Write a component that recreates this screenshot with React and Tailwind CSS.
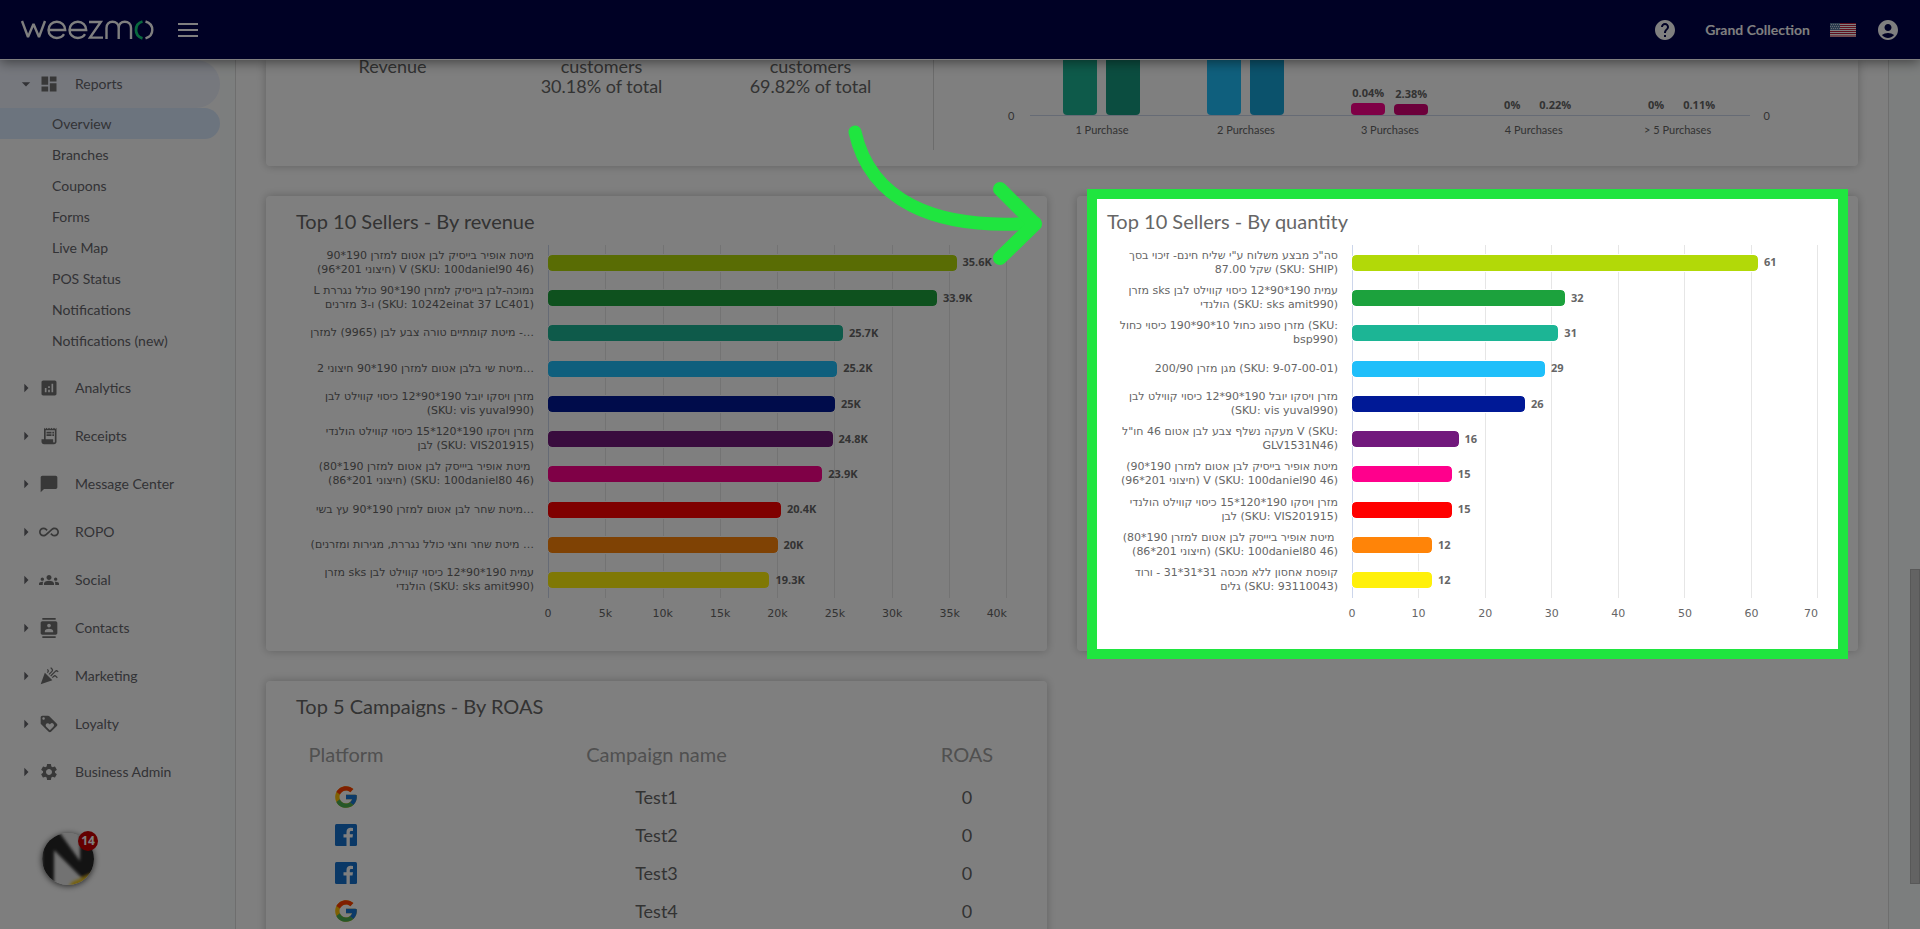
import React from 'react';
import {
  MdAccountCircle,
  MdAllInclusive,
  MdAnalytics,
  MdArrowDropDown,
  MdArrowRight,
  MdCelebration,
  MdChatBubble,
  MdContacts,
  MdDashboard,
  MdGroups,
  MdHelp,
  MdLoyalty,
  MdReceiptLong,
  MdSettings,
} from 'react-icons/md';
import { FcGoogle } from 'react-icons/fc';

const reportLinks = [
  'Overview',
  'Branches',
  'Coupons',
  'Forms',
  'Live Map',
  'POS Status',
  'Notifications',
  'Notifications (new)',
];

const sections = [
  { name: 'Analytics', icon: MdAnalytics },
  { name: 'Receipts', icon: MdReceiptLong },
  { name: 'Message Center', icon: MdChatBubble },
  { name: 'ROPO', icon: MdAllInclusive },
  { name: 'Social', icon: MdGroups },
  { name: 'Contacts', icon: MdContacts },
  { name: 'Marketing', icon: MdCelebration },
  { name: 'Loyalty', icon: MdLoyalty },
  { name: 'Business Admin', icon: MdSettings },
];

const barColors = [
  'bg-[#b2d908]',
  'bg-[#1ca23d]',
  'bg-[#1cb595]',
  'bg-[#1fbffa]',
  'bg-[#001996]',
  'bg-[#72197d]',
  'bg-[#ff008c]',
  'bg-[#ff0000]',
  'bg-[#ff8408]',
  'bg-[#fff00a]',
];

const revenueRows = [
  { lines: ['מיטת אופיר בייסיק לבן אטום למזרן 190*90', '(חיצוני 201*96) V (SKU: 100daniel90 46)'], value: 35.6, label: '35.6K' },
  { lines: ['L נמוכה-לבן בייסיק למזרן 190*90 כולל נגררת', 'ו-3 מזרנים (SKU: 10242einat 37 LC401)'], value: 33.9, label: '33.9K' },
  { lines: ['מיטת קומתיים טורה צבע לבן (9965) למזרן -…'], value: 25.7, label: '25.7K' },
  { lines: ['מיטת שי בלבן אטום למזרן 190*90 חיצוני 2…'], value: 25.2, label: '25.2K' },
  { lines: ['מזרן ויסקו יובל 190*90*12 כיסוי קווילט לבן', '(SKU: vis yuval990)'], value: 25, label: '25K' },
  { lines: ['מזרן ויסקו 190*120*15 כיסוי קווילט הולנדי', 'לבן (SKU: VIS201915)'], value: 24.8, label: '24.8K' },
  { lines: ['(מיטת אופיר ביייסק לבן אטום למזרן 190*80\u00a0', '(חיצוני 201*86) (SKU: 100daniel80 46)'], value: 23.9, label: '23.9K' },
  { lines: ['מיטת שחר לבן אטום למזרן 190*90 עץ בשי…'], value: 20.3, label: '20.4K' },
  { lines: ['(מיטת שחר וחצי כולל נגררת, מגירות ומזרנים …'], value: 20, label: '20K' },
  { lines: ['מזרן sks עמית 190*90*12 כיסוי קווילט לבן', 'הולנדי (SKU: sks amit990)'], value: 19.3, label: '19.3K' },
];

const quantityRows = [
  { lines: ['סה"כ מבצע משלוח ע"י שליח חינם- זיכוי בסך', 'שקל 87.00 (SKU: SHIP)'], value: 61, label: '61' },
  { lines: ['מזרן sks עמית 190*90*12 כיסוי קווילט לבן', 'הולנדי (SKU: sks amit990)'], value: 32, label: '32' },
  { lines: ['מזרן ספוג כחול 10*90*190 כיסוי כחול (SKU:', 'bsp990)'], value: 31, label: '31' },
  { lines: ['מגן מזרן 200/90 (SKU: 9-07-00-01)'], value: 29, label: '29' },
  { lines: ['מזרן ויסקו יובל 190*90*12 כיסוי קווילט לבן', '(SKU: vis yuval990)'], value: 26, label: '26' },
  { lines: ['מעקה נשלף צבע לבן אטום 46 חו"ל V (SKU:', 'GLV1531N46)'], value: 16, label: '16' },
  { lines: ['(מיטת אופיר בייסיק לבן אטום למזרן 190*90', '(חיצוני 201*96) V (SKU: 100daniel90 46)'], value: 15, label: '15' },
  { lines: ['מזרן ויסקו 190*120*15 כיסוי קווילט הולנדי', 'לבן (SKU: VIS201915)'], value: 15, label: '15' },
  { lines: ['(מיטת אופיר ביייסק לבן אטום למזרן 190*80\u00a0', '(חיצוני 201*86) (SKU: 100daniel80 46)'], value: 12, label: '12' },
  { lines: ['קופסת אחסון ללא מכסה 31*31*31 - ורוד', 'גלים (SKU: 93110043)'], value: 12, label: '12' },
];

const purchases = [
  { name: '1 Purchase', bars: [{ color: 'h-14 bg-[#1cb595]' }, { color: 'h-14 bg-[#179b80]' }] },
  { name: '2 Purchases', bars: [{ color: 'h-14 bg-[#1fbffa]' }, { color: 'h-14 bg-[#17a5d8]' }] },
  {
    name: '3 Purchases',
    bars: [
      { label: '0.04%', color: 'h-3 rounded bg-[#ff008c]' },
      { label: '2.38%', color: 'h-[11px] rounded bg-[#d90077]' },
    ],
  },
  { name: '4 Purchases', bars: [{ label: '0%', color: 'h-0' }, { label: '0.22%', color: 'h-0' }] },
  { name: '> 5 Purchases', bars: [{ label: '0%', color: 'h-0' }, { label: '0.11%', color: 'h-0' }] },
];

const campaigns = [
  { platform: 'google', name: 'Test1', roas: 0 },
  { platform: 'facebook', name: 'Test2', roas: 0 },
  { platform: 'facebook', name: 'Test3', roas: 0 },
  { platform: 'google', name: 'Test4', roas: 0 },
];

const WeezmoLogo = () => (
  <svg width="134" height="20" viewBox="0 0 134 20" fill="none" stroke="#fff" strokeWidth="2.4" role="img" aria-label="weezmo">
    <path d="M2 1 8 17 13.500 4 19 17 25 1" strokeLinejoin="bevel" />
    <path d="M28 10H45.200C45.200 5 41.500 1.800 36.800 1.800S28.500 5.500 28.500 10 32 18 36.800 18C40 18 42.500 16.600 44 14.200" />
    <path d="M49 10H66.200C66.200 5 62.500 1.800 57.800 1.800S49.500 5.500 49.500 10 53 18 57.800 18C61 18 63.500 16.600 65 14.200" />
    <path d="M69 2H80.800L70 17.600H83" />
    <path d="M86.500 19V8C86.500 4 89 1.800 92.500 1.800S98.700 4 98.700 8V19M98.700 8C98.700 4 101.200 1.800 104.800 1.800S111 4 111 8V19" />
    <path d="M122.500 1.500C118 2.800 116 6 116 10S118 17 122.500 18.300" stroke="#12d07c" strokeWidth="2.800" />
    <path d="M125.500 1.500C130 2.800 132.300 6 132.300 10S130 17 125.500 18.300" />
  </svg>
);

const UsFlag = () => (
  <svg width="26" height="14" viewBox="0 0 26 14" role="img" aria-label="English">
    <rect width="26" height="14" fill="#fff" />
    <path d="M0 .5H26M0 2.500H26M0 4.500H26M0 6.500H26M0 8.500H26M0 10.500H26M0 13H26" stroke="#c01f3c" />
    <rect width="10" height="7" fill="#54749c" />
    <path d="M1 1.500H10M0 3.500H10M1 5.500H10" stroke="#c9d6e6" strokeDasharray="1 1" />
  </svg>
);

const FacebookIcon = () => (
  <svg width="22" height="22" viewBox="0 0 22 22" role="img" aria-label="Facebook">
    <rect width="22" height="22" rx="1.500" fill="#1570cc" />
    <path d="M11.500 22V13.500H8.500V10.200H11.500V8C11.500 5 13.300 3.800 15.700 3.800L18 3.900V7H16.300C15.100 7 14.800 7.600 14.800 8.500V10.200H18L17.500 13.500H14.800V22Z" fill="#fff" />
  </svg>
);

const Header = () => (
  <header className="relative z-10 flex h-[60px] shrink-0 items-center border-b border-white bg-[#00024a] px-5 text-white shadow-[0_2px_12px_rgba(0,0,0,0.5)]">
    <WeezmoLogo />
    <button type="button" aria-label="Toggle menu" className="ml-6 flex h-3.5 w-5 flex-col justify-between">
      <span className="h-0.5 w-full bg-white" />
      <span className="h-0.5 w-full bg-white" />
      <span className="h-0.5 w-full bg-white" />
    </button>
    <div className="ml-auto flex items-center">
      <button type="button" aria-label="Help">
        <MdHelp size={24} />
      </button>
      <span className="ml-7 text-sm font-bold">Grand Collection</span>
      <button type="button" aria-label="Language" className="ml-5">
        <UsFlag />
      </button>
      <button type="button" aria-label="Account" className="ml-5">
        <MdAccountCircle size={24} />
      </button>
    </div>
  </header>
);

const Sidebar = () => (
  <aside className="w-[236px] shrink-0 border-r border-[#dcdcdc] bg-[#f9fdfc]">
    <nav className="h-full w-[220px] bg-[#fdfdfd] text-sm text-[#66666c]">
      <a href="#reports" className="flex h-12 items-center rounded-r-3xl bg-[#ecf0fb]">
        <MdArrowDropDown size={20} className="ml-4" />
        <MdDashboard size={20} className="ml-[3px] text-[#707070]" />
        <span className="ml-4">Reports</span>
      </a>
      <ul className="mb-2">
        {reportLinks.map((name, index) => (
          <li key={name}>
            <a
              href="#overview"
              className={`flex h-[31px] items-center pl-[52px] ${index === 0 ? 'rounded-r-2xl bg-[#d8e8fc]' : ''}`}
            >
              {name}
            </a>
          </li>
        ))}
      </ul>
      {sections.map(({ name, icon: Icon }) => (
        <a key={name} href="#section" className="flex h-12 items-center">
          <MdArrowRight size={20} className="ml-4" />
          <Icon size={20} className="ml-[3px] text-[#707070]" />
          <span className="ml-4">{name}</span>
        </a>
      ))}
      <button type="button" aria-label="14 unread messages" className="relative mt-[37px] ml-[42px] block size-[52px] rounded-full shadow-[0_1px_6px_rgba(0,0,0,0.7)]">
        <svg width="52" height="52" viewBox="0 0 52 52" className="rounded-full">
          <defs>
            <filter id="soft">
              <feGaussianBlur stdDeviation="1.500" />
            </filter>
          </defs>
          <rect width="52" height="52" fill="#e4e4e4" />
          <g filter="url(#soft)">
            <path d="M0-4H15L38 28V-4H56V44L40 45L12 17V56H0Z" fill="#262626" />
            <path d="M24 58 30 49 56 38V58Z" fill="#ecc21c" />
          </g>
        </svg>
        <span className="absolute -top-0.5 left-9 flex size-5 items-center justify-center rounded-full bg-[#c80000] font-['Open_Sans',sans-serif] text-xs font-bold text-white">
          14
        </span>
      </button>
    </nav>
  </aside>
);

const SellersChart = ({ title, rows, max, ticks, wide, children }) => (
  <section className="relative rounded-sm bg-white pt-[13px] pr-10 pb-7 pl-[30px] shadow-[0_0_10px_rgba(0,0,0,0.25)]">
    <h2 className="text-xl/6 text-[#666]">{title}</h2>
    <div className="mt-3 flex font-['DejaVu_Sans',sans-serif] text-[11px] text-[#666]">
      <ul className={`grid h-[353px] shrink-0 auto-rows-fr ${wide ? 'w-[238px]' : 'w-[231px]'}`}>
        {rows.map((row, index) => (
          <li key={index} className="flex flex-col justify-center text-right leading-[14px] whitespace-nowrap">
            {row.lines.map((line) => (
              <span key={line} dir="ltr" className="block">
                {line}
              </span>
            ))}
          </li>
        ))}
      </ul>
      <div className="ml-3.5 min-w-0 grow">
        <div className="relative">
          <div className="absolute inset-0 flex border-l border-[#ccd6eb]">
            {ticks.slice(1).map((tick) => (
              <span key={tick} className="grow border-r border-[#e6e6e6]" />
            ))}
          </div>
          <div className="relative grid h-[353px] auto-rows-fr">
            {rows.map((row, index) => (
              <div key={index} className="flex items-center">
                <div
                  className={`h-4 shrink-0 rounded outline outline-white ${barColors[index]}`}
                  style={{ width: `${(row.value / max) * 100}%` }}
                />
                <span className="ml-1.5 font-['Open_Sans',sans-serif] font-bold">{row.label}</span>
              </div>
            ))}
          </div>
        </div>
        <div className="mt-2 flex">
          {ticks.map((tick, index) => (
            <span key={tick} className={index === ticks.length - 1 ? 'w-0 grow-0' : 'w-0 grow'}>
              <span className={`flex w-0 ${index === ticks.length - 1 ? 'justify-end' : 'justify-center'}`}>{tick}</span>
            </span>
          ))}
        </div>
      </div>
    </div>
    {children}
  </section>
);

const CustomersCard = () => (
  <section className="flex h-[106px] rounded-b bg-white pb-4 shadow-[0_0_10px_rgba(0,0,0,0.25)]">
    <div className="flex w-[668px] justify-center border-r border-[#d8d8d8] pl-1 text-center text-lg/5 text-[#666]">
      <p className="-mt-1 w-[209px]">Revenue</p>
      <p className="-mt-1 w-[209px]">
        customers
        <br />
        30.18% of total
      </p>
      <p className="-mt-1 w-[209px]">
        customers
        <br />
        69.82% of total
      </p>
    </div>
    <div className="flex grow pr-[88px] pl-[74px] text-[11px] text-[#666]">
      <span className="mt-12 w-[22px]">0</span>
      <div className="grow">
        <div className="flex h-14 border-b border-[#ccd6eb]">
          {purchases.map((group) => (
            <div key={group.name} className="flex w-0 grow items-end justify-center gap-[9px]">
              {group.bars.map((bar, index) => (
                <div key={index} className="flex w-[34px] flex-col items-center">
                  <span className="mb-0.5 font-['Open_Sans',sans-serif] font-bold">{bar.label}</span>
                  <div className={`w-full rounded-b ${bar.color}`} />
                </div>
              ))}
            </div>
          ))}
        </div>
        <div className="mt-1.5 flex text-center">
          {purchases.map((group) => (
            <span key={group.name} className="w-0 grow">
              {group.name}
            </span>
          ))}
        </div>
      </div>
      <span className="mt-12 ml-3.5">0</span>
    </div>
  </section>
);

const CampaignsCard = () => (
  <section className="rounded-sm bg-white pt-[13px] pb-8 shadow-[0_0_10px_rgba(0,0,0,0.25)]">
    <h2 className="pl-[30px] text-xl/6 text-[#666]">Top 5 Campaigns - By ROAS</h2>
    <table className="mt-4 w-full table-fixed text-center text-lg/6 text-[#666]">
      <thead>
        <tr className="h-11 text-xl/6 text-[#a0a0a0]">
          <th className="w-40 pb-1 font-normal">Platform</th>
          <th className="pb-1 font-normal">Campaign name</th>
          <th className="w-40 pb-1 font-normal">ROAS</th>
        </tr>
      </thead>
      <tbody>
        {campaigns.map((campaign) => (
          <tr key={campaign.name} className="h-[38px]">
            <td>
              <span className="flex justify-center">
                {campaign.platform === 'google' ? <FcGoogle size={26} /> : <FacebookIcon />}
              </span>
            </td>
            <td>{campaign.name}</td>
            <td>{campaign.roas}</td>
          </tr>
        ))}
      </tbody>
    </table>
  </section>
);

// Green frame round the chart, everything outside of it is dimmed
const Spotlight = () => (
  <div className="pointer-events-none absolute inset-x-2.5 -top-[7px] -bottom-2 z-20 border-10 border-[#1fe53f] shadow-[0_0_0_3000px_rgba(0,0,0,0.5)]">
    <svg
      width="196"
      height="142"
      viewBox="0 0 196 142"
      fill="none"
      stroke="#1fe53f"
      strokeWidth="14"
      strokeLinecap="round"
      strokeLinejoin="round"
      className="absolute -top-[74px] -left-[249px]"
    >
      <path d="M7 7C22 74 84 106 187 98" strokeWidth="13" />
      <path d="M152 64 187 99 152 133" />
    </svg>
  </div>
);

export default function App() {
  return (
    <div className="relative flex h-screen flex-col overflow-hidden bg-white font-['Lato',sans-serif]">
      <Header />
      <div className="flex min-h-0 grow">
        <Sidebar />
        <main className="min-w-0 grow px-[30px]">
          <CustomersCard />
          <div className="mt-[30px] grid grid-cols-2 gap-[30px]">
            <SellersChart
              title="Top 10 Sellers - By revenue"
              rows={revenueRows}
              max={40}
              ticks={['0', '5k', '10k', '15k', '20k', '25k', '30k', '35k', '40k']}
              wide
            />
            <SellersChart
              title="Top 10 Sellers - By quantity"
              rows={quantityRows}
              max={70}
              ticks={['0', '10', '20', '30', '40', '50', '60', '70']}
            >
              <Spotlight />
            </SellersChart>
            <CampaignsCard />
          </div>
        </main>
        <div className="flex w-8 shrink-0 justify-end border-l border-[#dcdcdc] bg-[#f9fdfc]">
          <div className="mt-[509px] h-[315px] w-2.5 border border-[#b0b0b0] bg-[#c6c6c6]" />
        </div>
      </div>
    </div>
  );
}
